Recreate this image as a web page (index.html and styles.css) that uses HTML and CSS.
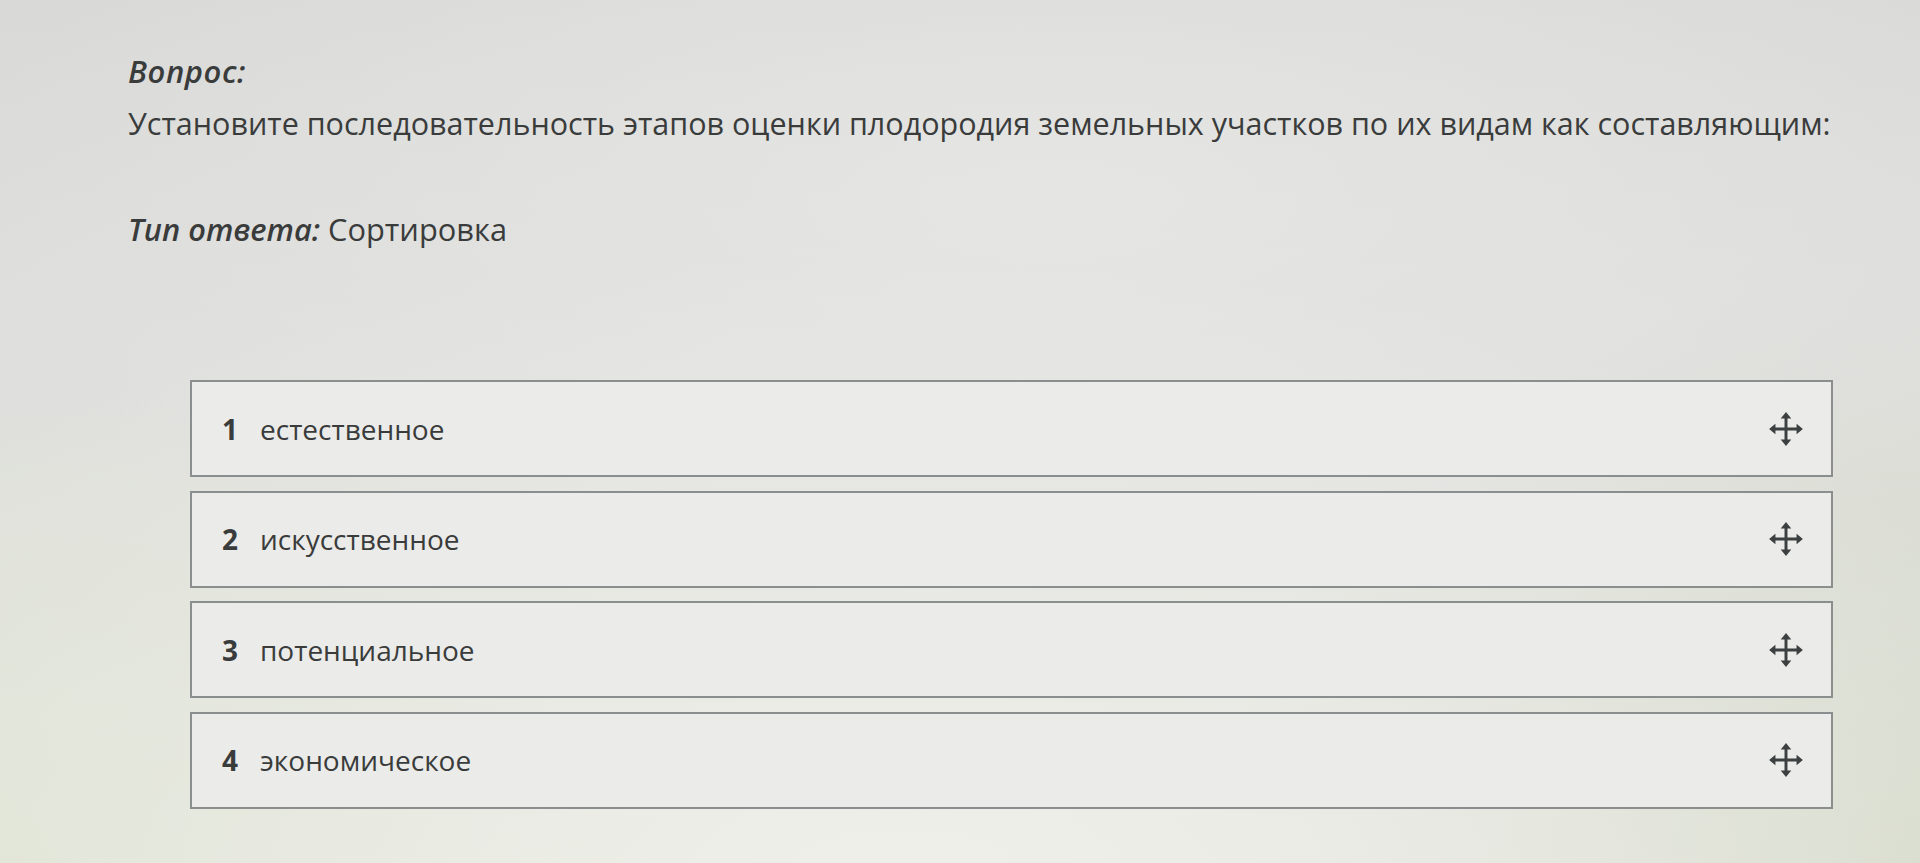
FILE: index.html
```html
<!DOCTYPE html>
<html lang="ru">
<head>
<meta charset="utf-8">
<link rel="stylesheet" href="styles.css">
</head>
<body>
<div class="page">
  <div class="question">
    <div class="label">Вопрос:</div>
    <div class="text">Установите последовательность этапов оценки плодородия земельных участков по их видам как составляющим:</div>
  </div>
  <div class="type"><span class="label">Тип ответа:</span> Сортировка</div>
  <div class="list">
    <div class="item"><span class="num">1</span><span class="name">естественное</span>
      <svg class="move" viewBox="0 0 36 36"><path d="M18 6V30M6 18H30" stroke="#3c4040" stroke-width="2.8" fill="none"/><path d="M18 2l-5 6h10zM18 34l-5-6h10zM2 18l6-5v10zM34 18l-6-5v10z" fill="#3c4040"/></svg></div>
    <div class="item"><span class="num">2</span><span class="name">искусственное</span>
      <svg class="move" viewBox="0 0 36 36"><path d="M18 6V30M6 18H30" stroke="#3c4040" stroke-width="2.8" fill="none"/><path d="M18 2l-5 6h10zM18 34l-5-6h10zM2 18l6-5v10zM34 18l-6-5v10z" fill="#3c4040"/></svg></div>
    <div class="item"><span class="num">3</span><span class="name">потенциальное</span>
      <svg class="move" viewBox="0 0 36 36"><path d="M18 6V30M6 18H30" stroke="#3c4040" stroke-width="2.8" fill="none"/><path d="M18 2l-5 6h10zM18 34l-5-6h10zM2 18l6-5v10zM34 18l-6-5v10z" fill="#3c4040"/></svg></div>
    <div class="item"><span class="num">4</span><span class="name">экономическое</span>
      <svg class="move" viewBox="0 0 36 36"><path d="M18 6V30M6 18H30" stroke="#3c4040" stroke-width="2.8" fill="none"/><path d="M18 2l-5 6h10zM18 34l-5-6h10zM2 18l6-5v10zM34 18l-6-5v10z" fill="#3c4040"/></svg></div>
  </div>
</div>
</body>
</html>
```
FILE: styles.css
```css
html, body {
  margin: 0;
  padding: 0;
  height: 100%;
}
body {
  width: 1920px;
  height: 863px;
  overflow: hidden;
  font-family: "Open Sans", "Noto Sans", sans-serif;
  color: #3a3c3c;
  background:
    radial-gradient(ellipse 1300px 650px at 900px 900px, rgba(240,240,234,0.95) 0%, rgba(236,236,230,0) 100%),
    radial-gradient(ellipse 1100px 420px at 1050px 200px, rgba(230,230,228,0.9) 0%, rgba(230,230,228,0) 100%),
    radial-gradient(ellipse 900px 500px at 0px 863px, rgba(220,226,208,0.9) 0%, rgba(220,226,208,0) 100%),
    radial-gradient(ellipse 700px 600px at 1920px 863px, rgba(212,217,200,0.9) 0%, rgba(212,217,200,0) 100%),
    linear-gradient(180deg, #d9d9d8 0%, #dfdfdd 40%, #e3e4df 100%);
}
.page {
  padding: 51px 0 0 128px;
}
.question .label {
  font-style: italic;
  font-weight: 600;
  font-size: 31px;
  line-height: 40px;
  letter-spacing: 0.6px;
}
.question .text {
  font-size: 30.5px;
  line-height: 40px;
  margin-top: 12px;
}
.type {
  margin-top: 66px;
  font-size: 30.8px;
  line-height: 40px;
}
.type .label {
  font-style: italic;
  font-weight: 600;
}
.list {
  margin: 131px 0 0 62px;
  width: 1643px;
  display: flex;
  flex-direction: column;
  gap: 13.5px;
}
.item {
  height: 97px;
  box-sizing: border-box;
  border: 2px solid #8a8e8e;
  background: #ebebe9;
  display: flex;
  align-items: center;
  padding: 0 26px 0 30px;
}
.num {
  font-weight: 700;
  font-size: 28px;
  width: 38px;
}
.name {
  font-size: 28px;
  flex: 1;
}
.move {
  width: 38px;
  height: 38px;
}
```
